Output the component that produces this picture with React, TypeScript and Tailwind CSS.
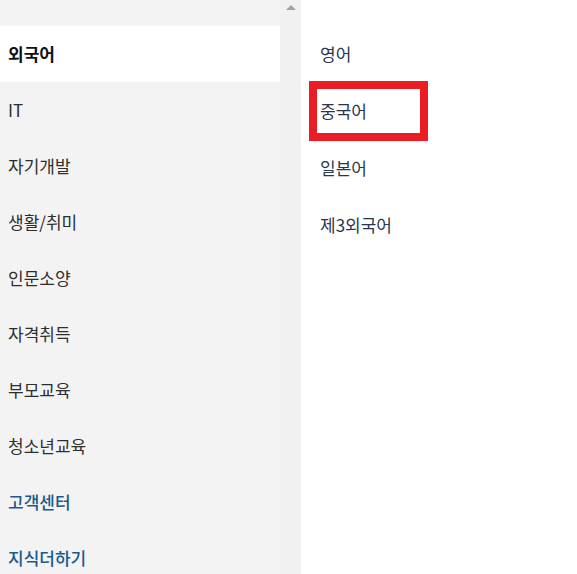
import React from 'react';

const categories = [
  { label: '외국어', active: true },
  { label: 'IT' },
  { label: '자기개발' },
  { label: '생활/취미' },
  { label: '인문소양' },
  { label: '자격취득' },
  { label: '부모교육' },
  { label: '청소년교육' },
  { label: '고객센터', link: true },
  { label: '지식더하기', link: true },
];

const subItems = ['영어', '중국어', '일본어', '제3외국어'];

const App: React.FC = () => {
  return (
    <div
      className="flex h-[574px] w-[577px] overflow-hidden bg-white"
      style={{ fontFamily: '"Noto Sans CJK KR", "Noto Sans", sans-serif' }}
    >
      {/* Left category menu */}
      <div className="flex w-[301px] bg-[#f3f3f3]">
        <ul className="flex w-[280px] flex-col pt-[26px]">
          {categories.map((c) => (
            <li
              key={c.label}
              className={`flex h-[56px] shrink-0 items-center pb-[1px] pl-2 text-[17px] leading-none ${
                c.active
                  ? 'bg-white font-bold text-[#111]'
                  : c.link
                  ? 'font-medium text-[#1a5a8c]'
                  : 'text-[#2e2e2e]'
              }`}
            >
              {c.label}
            </li>
          ))}
        </ul>

        {/* Scrollbar */}
        <div className="flex w-[21px] justify-center bg-[#f1f1f1] pt-[5px]">
          <div className="h-0 w-0 border-x-[5px] border-b-[5px] border-x-transparent border-b-[#a3a3a3]" />
        </div>
      </div>

      {/* Right sub menu */}
      <ul className="flex flex-col pl-[19px] pt-[27px]">
        {subItems.map((s) => (
          <li
            key={s}
            className="relative flex h-[57px] items-center pb-[5px] text-[17px] leading-none text-[#2a3550]"
          >
            {s}
            {s === '중국어' && (
              <span className="absolute left-[-11px] top-[-3px] h-[60px] w-[119px] border-[8px] border-[#ec1c24]" />
            )}
          </li>
        ))}
      </ul>
    </div>
  );
};

export default App;
